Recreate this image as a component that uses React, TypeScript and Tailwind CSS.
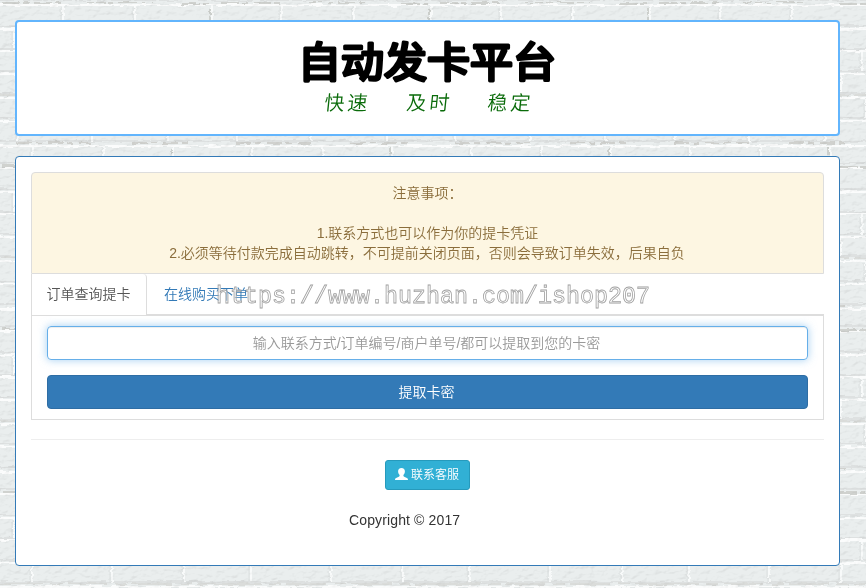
import type { FC } from 'react';
import { useState } from 'react';

const rows = [
  { y: 4, h: 20, joints: [61, 133, 210] },
  { y: 28, h: 19, joints: [12, 96, 170] },
  { y: 50, h: 19, joints: [70, 142, 203] },
  { y: 73, h: 18, joints: [30, 110, 182] },
  { y: 97, h: 19, joints: [68, 140, 207] },
  { y: 120, h: 19, joints: [16, 90, 166] },
  { y: 145, h: 16, joints: [31, 102, 171] },
];

// Whitewashed brick wall, repeated every 219x163
const BrickWall: FC = () => (
  <svg className="absolute inset-0 w-full h-full" aria-hidden="true">
    <defs>
      <filter id="rough" x="0" y="0" width="100%" height="100%">
        <feTurbulence type="fractalNoise" baseFrequency="0.08 0.3" numOctaves="3" seed="4" result="n" />
        <feDisplacementMap in="SourceGraphic" in2="n" scale="4" xChannelSelector="R" yChannelSelector="G" />
      </filter>
      <filter id="plaster" x="0" y="0" width="100%" height="100%" colorInterpolationFilters="sRGB">
        <feTurbulence type="fractalNoise" baseFrequency="0.14 0.22" numOctaves="4" seed="8" result="n" />
        <feDiffuseLighting in="n" surfaceScale="1.4" diffuseConstant="1.13" lightingColor="#ffffff">
          <feDistantLight azimuth="235" elevation="62" />
        </feDiffuseLighting>
      </filter>
      <pattern id="bricks" width="219" height="163" patternUnits="userSpaceOnUse" x="2" y="2">
        <rect width="219" height="163" fill="#eaeeee" />
        {rows.map((row) => (
          <g key={row.y}>
            <path d={`M0 ${row.y - 1}H219`} stroke="#fbfcfc" strokeWidth="1.8" />
            <path d={`M0 ${row.y + row.h}H219`} stroke="#d3d5d4" strokeWidth="1" />
            {row.joints.map((x) => (
              <g key={x}>
                <path d={`M${x} ${row.y}v${row.h}`} stroke="#f8fafa" strokeWidth="2" />
                <path d={`M${x - 2} ${row.y + 1}v${row.h - 2}`} stroke="#d8dbda" strokeWidth="0.8" />
              </g>
            ))}
          </g>
        ))}
        <path d="M0 1H60M85 0H150M180 2H212" stroke="#d0d2cf" strokeWidth="2" strokeDasharray="18 3 6 5" />
        <path d="M15 141H90M130 141H190" stroke="#d0d1ce" strokeWidth="2" strokeDasharray="15 4 6 6" />
        <path d="M0 93H219" stroke="#d5d6d4" strokeWidth="1.6" strokeDasharray="40 8 12 5" />
        <path d="M208 7v15M169 146v11" stroke="#c4c7c2" strokeWidth="1.4" strokeDasharray="6 2" />
      </pattern>
    </defs>
    <rect width="100%" height="100%" fill="url(#bricks)" filter="url(#rough)" />
    <rect width="100%" height="100%" filter="url(#plaster)" opacity="0.16" className="mix-blend-multiply" />
  </svg>
);

const Logo: FC = () => (
  <svg width="270" height="96" viewBox="0 0 270 96" className="overflow-visible leading-none font-['Noto_Sans_CJK_SC',sans-serif]">
    <text x="5" y="46" fontSize="41" fontWeight="400" textLength="258" lengthAdjust="spacingAndGlyphs" stroke="#000" strokeWidth="3.2" strokeLinejoin="round" strokeLinecap="round">
      自动发卡平台
    </text>
    <g fontSize="20" fontWeight="350" fill="#0a6b0a" transform="skewX(-6)">
      <text x="39" y="79" textLength="43">快速</text>
      <text x="121" y="79" textLength="43">及时</text>
      <text x="202" y="79" textLength="43">稳定</text>
    </g>
  </svg>
);

const tabs = ['订单查询提卡', '在线购买下单'];

export default function App() {
  const [activeTab, setActiveTab] = useState(tabs[0]);
  const [contact, setContact] = useState('');

  return (
    <div className="relative w-full h-[588px] overflow-hidden bg-[#e7ebeb] font-['Liberation_Sans','Noto_Sans_CJK_SC',sans-serif] font-[350] text-sm leading-5 text-[#333]">
      <BrickWall />

      <div className="relative flex flex-col gap-5 pt-5 pl-[15px] w-[840px]">
        <header className="h-[116px] bg-white border-2 border-[#62b5fd] rounded flex justify-center pt-[9px]">
          <Logo />
        </header>

        <main className="h-[410px] bg-white border border-[#337ab7] rounded p-[15px]">
          {/* Notice */}
          <div className="h-[102px] bg-[#fdf6e2] border border-[#ddd] rounded-t-[4px] pt-[10px] text-center text-[#8a6d3b]">
            <p>注意事项：</p>
            <p className="mt-5">1.联系方式也可以作为你的提卡凭证</p>
            <p className="-ml-px">2.必须等待付款完成自动跳转，不可提前关闭页面，否则会导致订单失效，后果自负</p>
          </div>

          {/* Tabs */}
          <div className="relative flex h-[42px] border-b-2 border-[#ddd]">
            {tabs.map((tab) => (
              <button
                key={tab}
                onClick={() => setActiveTab(tab)}
                className={tab === activeTab
                  ? 'h-[42px] w-[116px] mr-0.5 pr-px pb-px bg-white border border-t-0 border-[#ddd] rounded-tr text-[#555]'
                  : 'h-[40px] px-[15px] text-[#337ab7]'}
              >
                {tab}
              </button>
            ))}
            <span className="absolute left-[185px] top-[9px] font-['Liberation_Mono',monospace] font-normal text-[23.33px] leading-7 whitespace-nowrap text-white/40 pointer-events-none [-webkit-text-stroke:0.8px_#a0a0a0]">
              https://www.huzhan.com/ishop207
            </span>
          </div>

          {/* Query form */}
          <div className="h-[104px] border border-t-0 border-[#ddd] px-[15px] pt-[10px]">
            <input
              value={contact}
              onChange={(e) => setContact(e.target.value)}
              placeholder="输入联系方式/订单编号/商户单号/都可以提取到您的卡密"
              className="block w-full h-[34px] border border-[#66afe9] rounded text-center text-sm placeholder:text-[#999] outline-none pr-0.5 shadow-[inset_0_1px_1px_rgba(0,0,0,0.075),0_0_8px_rgba(102,175,233,0.6)]"
            />
            <button className="mt-[15px] block w-full h-[34px] bg-[#337ab7] border border-[#2e6da4] rounded text-white pr-0.5">
              提取卡密
            </button>
          </div>

          <hr className="mt-[19px] border-[#eee]" />

          <div className="mt-5 flex justify-center">
            <button className="w-[85px] h-[30px] flex items-center justify-center gap-[3px] bg-[#31b0d5] border border-[#269abc] rounded-[3px] text-white text-xs pr-px">
              <svg width="13" height="12" viewBox="0 0 13 12" fill="currentColor" className="-mt-0.5">
                <path d="M6.500 0C8.700 0 9.900 1.300 9.900 3.300c0 1.600-.7 2.900-1.500 3.700v.8c0 .5.3.7.8 1l2.700 1.300c.7.3 1.100.9 1.100 1.900H0c0-1 .4-1.600 1.100-1.900l2.700-1.300c.5-.3.8-.5.8-1V7C3.800 6.200 3.100 4.900 3.100 3.300 3.100 1.300 4.300 0 6.500 0z" />
              </svg>
              联系客服
            </button>
          </div>

          <p className="mt-5 pl-[318px] tracking-[0.13px]">Copyright © 2017</p>
        </main>
      </div>
    </div>
  );
}
